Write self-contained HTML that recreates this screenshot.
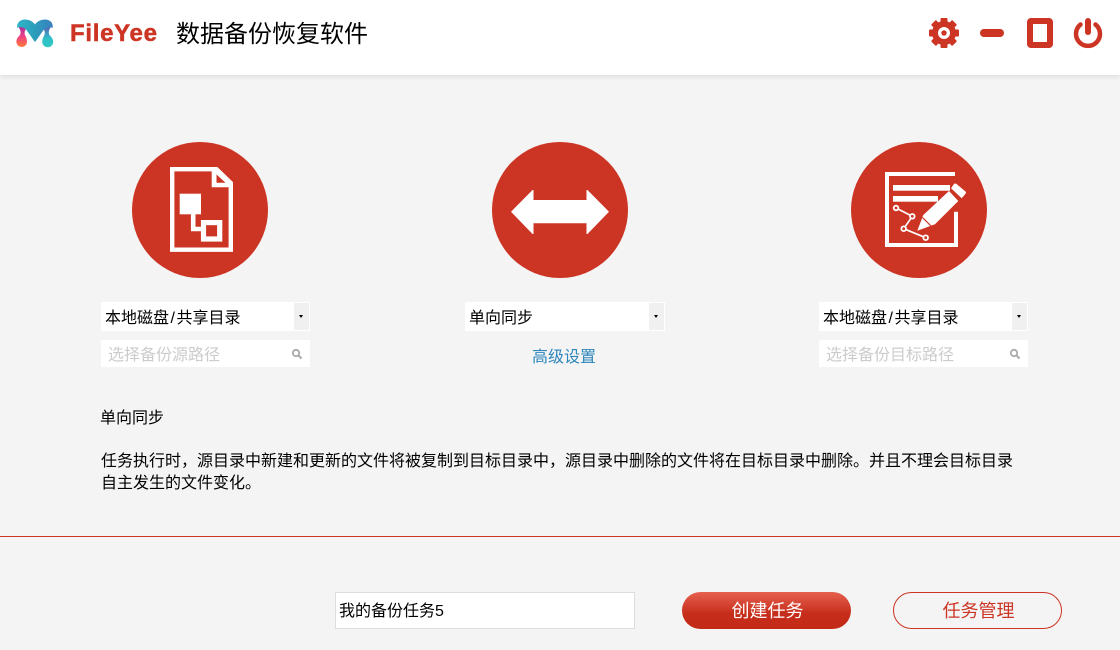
<!DOCTYPE html>
<html lang="zh-CN"><head><meta charset="utf-8"><title>FileYee</title>
<style>
html,body{margin:0;padding:0}
body{width:1120px;height:650px;background:#f4f4f4;position:relative;overflow:hidden;font-family:"Liberation Sans","Noto Sans CJK SC",sans-serif;color:#000}
.a{position:absolute;white-space:nowrap}
.hd{left:0;top:0;width:1120px;height:75px;background:#fff;box-shadow:0 1px 6px rgba(0,0,0,.12)}
.box{background:#fff;height:29px;top:302px}
.arr{position:absolute;right:1px;top:1px;width:15px;height:27px;background:#f0f0f0}
.arr:after{content:"";position:absolute;left:5px;top:12px;border-left:2.5px solid transparent;border-right:2.5px solid transparent;border-top:3px solid #000}
.t{font-size:16px;line-height:22px}
.ph{color:#ccc}
.inp{background:#fff;height:27px;top:340px;width:209px}
.btn{top:592px;width:169px;height:37px;box-sizing:border-box;border-radius:19px;text-align:center;font-size:18px;line-height:37px;padding:1px 0 0 2px}
.s{margin:0 1.5px}
</style></head><body>
<div class="a hd"></div>
<svg class="a" style="left:0;top:0" width="1120" height="300" viewBox="0 0 1120 300">
<defs>
<linearGradient id="lg1" x1="0" y1="0" x2="1" y2="0"><stop offset="0" stop-color="#2fb6c6"/><stop offset=".5" stop-color="#2b9dbb"/><stop offset="1" stop-color="#3a7fc0"/></linearGradient>
<linearGradient id="lg2" x1="0" y1="0" x2="0" y2="1"><stop offset="0" stop-color="#a0309a"/><stop offset=".5" stop-color="#ee3f86"/><stop offset="1" stop-color="#ff7a35"/></linearGradient>
<linearGradient id="lg3" x1="0" y1="0" x2="0" y2="1"><stop offset="0" stop-color="#5a5ab5"/><stop offset=".6" stop-color="#30c0c8"/><stop offset="1" stop-color="#2fc8c4"/></linearGradient>
</defs>
<!-- logo -->
<path d="M18 26.500C21 25 25 25.500 26.500 29C24.500 30 24.300 33 25 35C26 37 27 39 27 41.700A5.300 5.300 0 1 1 16.400 41.700C16.400 39 18 37 20 35C21 33 21 30 18 26.500Z" fill="url(#lg2)"/>
<path d="M51.400 26.500C48.400 25 44.400 25.500 42.900 29C44.900 30 45.100 33 44.400 35C43.400 37 42.200 39 42.200 41.700A5.500 5.500 0 1 0 53.200 41.700C53.200 39 51.400 37 49.400 35C48.400 33 48.400 30 51.400 26.500Z" fill="url(#lg3)"/>
<path d="M17.300 28C16.500 22 21 19.500 25 19.500C29 19.500 33 21.500 35 24.500C37 21.500 41 19.500 45 19.500C49 19.500 53.500 22 52.700 28C50 26.500 46 27 43.500 30L35.500 41.500H34.500L26.500 30C24 27 20 26.500 17.300 28Z" fill="url(#lg1)"/>
<!-- gear -->
<g transform="translate(944 33)" fill="#cc3423">
<circle r="12"/>
<rect x="-3.500" y="-15" width="7" height="6" rx="1"/>
<rect x="-3.500" y="-15" width="7" height="6" rx="1" transform="rotate(45)"/>
<rect x="-3.500" y="-15" width="7" height="6" rx="1" transform="rotate(90)"/>
<rect x="-3.500" y="-15" width="7" height="6" rx="1" transform="rotate(135)"/>
<rect x="-3.500" y="-15" width="7" height="6" rx="1" transform="rotate(180)"/>
<rect x="-3.500" y="-15" width="7" height="6" rx="1" transform="rotate(225)"/>
<rect x="-3.500" y="-15" width="7" height="6" rx="1" transform="rotate(270)"/>
<rect x="-3.500" y="-15" width="7" height="6" rx="1" transform="rotate(315)"/>
<circle r="6" fill="#fff"/><circle r="2.700"/>
</g>
<rect x="980" y="29" width="24" height="8" rx="4" fill="#cc3423"/>
<rect x="1030" y="21" width="20" height="24" rx="1" fill="none" stroke="#cc3423" stroke-width="6"/>
<path d="M1080.500 24.500A12 12 0 1 0 1095.500 24.500" fill="none" stroke="#cc3423" stroke-width="4.500" stroke-linecap="round"/>
<path d="M1088 21V32" fill="none" stroke="#cc3423" stroke-width="6" stroke-linecap="round"/>
<!-- circles -->
<circle cx="200" cy="210" r="68" fill="#cc3423"/>
<circle cx="560" cy="210" r="68" fill="#cc3423"/>
<circle cx="919" cy="210" r="68" fill="#cc3423"/>
<!-- doc icon -->
<path d="M172.200 169.200H216.500L230.800 183V249.700H172.200Z" fill="none" stroke="#fff" stroke-width="4.400"/>
<path fill-rule="evenodd" d="M211.700 169H217.500L233 184V187.300H211.700ZM216.500 174.500V182.700H225.500Z" fill="#fff"/>
<rect x="179.700" y="193.700" width="21.300" height="20.600" fill="#fff"/>
<path d="M193.200 214V229H203" fill="none" stroke="#fff" stroke-width="4.600"/>
<rect x="203.500" y="222.600" width="16.200" height="16.400" fill="#cc3423" stroke="#fff" stroke-width="5.200"/>
<!-- arrow -->
<path d="M511 211.700L532.500 190H533.500V200H586.500V190H587.500L609 211.700L587.500 234H586.500V223.300H533.500V234H532.500Z" fill="#fff"/>
<!-- notes icon -->
<path d="M956 211.700V245H887V174H955" fill="none" stroke="#fff" stroke-width="4"/>
<rect x="893" y="185" width="57" height="5.700" fill="#fff"/>
<rect x="893" y="196" width="45" height="5.700" fill="#fff"/>
<path d="M949 191L958.300 201L935 224.300L917.300 230.700L923.300 215Z" fill="#fff"/>
<path d="M922.500 217.500L931.500 226.500" stroke="#cc3423" stroke-width="1.200" fill="none"/>
<path d="M951 188.300L954 184Q955 183 956.500 184L965.500 191.500Q966.500 192.500 965.500 193.800L961.700 198.300Z" fill="#fff"/>
<path d="M896 208L912.300 216.300L903.700 228.700L925.700 237.700" fill="none" stroke="#fff" stroke-width="1.700"/>
<g fill="#cc3423" stroke="#fff" stroke-width="1.800"><circle cx="896" cy="208" r="2.300"/><circle cx="912.300" cy="216.300" r="2.300"/><circle cx="903.700" cy="228.700" r="2.300"/><circle cx="925.700" cy="237.700" r="2.300"/></g>
</svg>
<div class="a" style="left:70px;top:19px;font-size:24px;line-height:30px;font-weight:bold;color:#cc3423;letter-spacing:.7px;-webkit-text-stroke:.5px #cc3423">FileYee</div>
<div class="a" style="left:176px;top:18px;font-size:24px;line-height:34px">数据备份恢复软件</div>

<div class="a box" style="left:101px;width:209px"><span class="a t" style="left:4px;top:6px">本地磁盘<span class="s">/</span>共享目录</span><i class="arr"></i></div>
<div class="a box" style="left:465px;width:200px"><span class="a t" style="left:4px;top:6px">单向同步</span><i class="arr"></i></div>
<div class="a box" style="left:819px;width:209px"><span class="a t" style="left:4px;top:6px">本地磁盘<span class="s">/</span>共享目录</span><i class="arr"></i></div>

<div class="a inp" style="left:101px"><span class="a t ph" style="left:7px;top:5px">选择备份源路径</span>
<svg class="a" style="left:190px;top:8px" width="12" height="12" viewBox="0 0 12 12"><circle cx="5" cy="5" r="3.200" fill="none" stroke="#aaa" stroke-width="1.800"/><path d="M7.500 7.500L10.500 10.500" stroke="#aaa" stroke-width="2"/></svg></div>
<div class="a inp" style="left:819px"><span class="a t ph" style="left:7px;top:5px">选择备份目标路径</span>
<svg class="a" style="left:190px;top:8px" width="12" height="12" viewBox="0 0 12 12"><circle cx="5" cy="5" r="3.200" fill="none" stroke="#aaa" stroke-width="1.800"/><path d="M7.500 7.500L10.500 10.500" stroke="#aaa" stroke-width="2"/></svg></div>

<div class="a t" style="left:532px;top:347px;color:#2d86bd">高级设置</div>
<div class="a t" style="left:100px;top:408px">单向同步</div>
<div class="a t" style="left:101px;top:451px">任务执行时，源目录中新建和更新的文件将被复制到目标目录中，源目录中删除的文件将在目标目录中删除。并且不理会目标目录<br>自主发生的文件变化。</div>

<div class="a" style="left:0;top:536px;width:1120px;height:1px;background:#cc3423"></div>

<div class="a" style="left:335px;top:592px;width:300px;height:37px;box-sizing:border-box;background:#fff;border:1px solid #ddd"><span class="a t" style="left:3px;top:8px">我的备份任务5</span></div>
<div class="a btn" style="left:682px;background:linear-gradient(#e6604f,#c62c1a 60%,#c42a18);color:#fff">创建任务</div>
<div class="a btn" style="left:893px;border:1px solid #cc3423;color:#cc3423;line-height:35px">任务管理</div>
</body></html>
